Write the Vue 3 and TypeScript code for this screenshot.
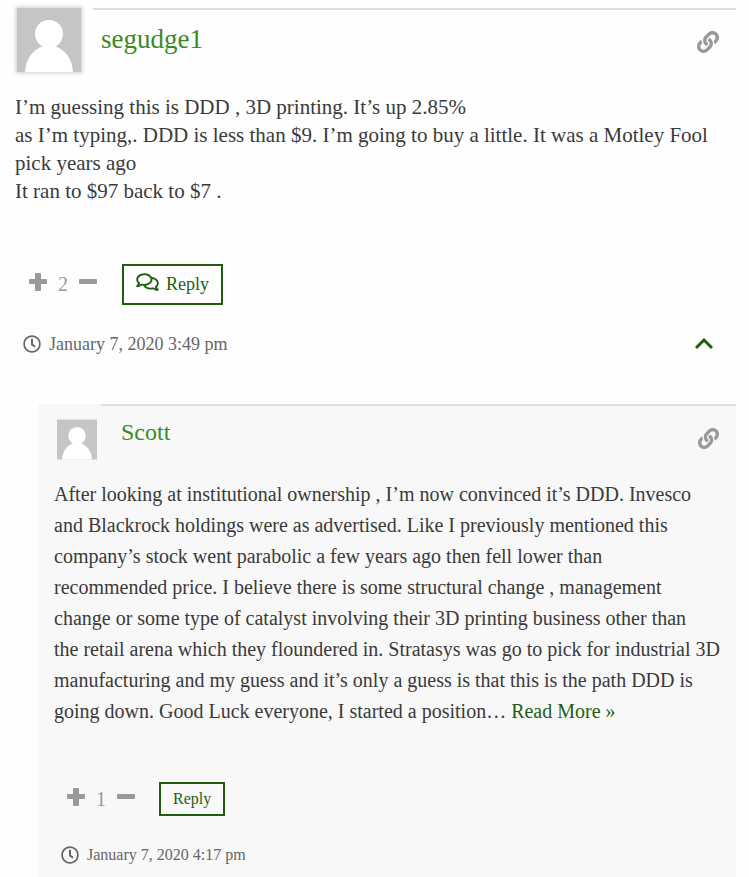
<script setup lang="ts">
import { ref } from 'vue'

interface Comment {
  id: number
  author: string
  lines: string[]
  truncated: boolean
  votes: number
  date: string
  reply: boolean
}

const comments = ref<Comment[]>([
  {
    id: 1,
    author: 'segudge1',
    lines: [
      'I’m guessing this is DDD , 3D printing. It’s up 2.85%',
      'as I’m typing,. DDD is less than $9. I’m going to buy a little. It was a Motley Fool pick years ago',
      'It ran to $97 back to $7 .',
    ],
    truncated: false,
    votes: 2,
    date: 'January 7, 2020 3:49 pm',
    reply: false,
  },
  {
    id: 2,
    author: 'Scott',
    lines: [
      'After looking at institutional ownership , I’m now convinced it’s DDD. Invesco',
      'and Blackrock holdings were as advertised. Like I previously mentioned this',
      'company’s stock went parabolic a few years ago then fell lower than',
      'recommended price. I believe there is some structural change , management',
      'change or some type of catalyst involving their 3D printing business other than',
      'the retail arena which they floundered in. Stratasys was go to pick for industrial 3D',
      'manufacturing and my guess and it’s only a guess is that this is the path DDD is',
      'going down. Good Luck everyone, I started a position…',
    ],
    truncated: true,
    votes: 1,
    date: 'January 7, 2020 4:17 pm',
    reply: true,
  },
])
</script>

<template>
  <main class="thread">
    <article v-for="c in comments" :key="c.id" class="comment" :class="{ nested: c.reply }">
      <header class="head">
        <svg class="avatar" viewBox="0 0 64 64" aria-hidden="true">
          <rect width="64" height="64" fill="#c5c5c5" />
          <circle cx="32" cy="26" r="14" fill="#fff" />
          <path d="M8 64C9 50 16 42 26 38H38C48 42 55 50 56 64Z" fill="#fff" />
        </svg>
        <div class="title">
          <a class="author" href="#">{{ c.author }}</a>
          <a class="permalink" href="#" aria-label="Comment link">
            <svg viewBox="0 0 512 512" aria-hidden="true">
              <path d="M326.612 185.391c59.747 59.809 58.927 155.698.36 214.59-.11.12-.24.25-.36.37l-67.2 67.2c-59.27 59.27-155.699 59.262-214.96 0-59.27-59.26-59.27-155.7 0-214.96l37.106-37.106c9.84-9.84 26.786-3.3 27.294 10.606.648 17.722 3.826 35.527 9.69 52.721 1.986 5.822.567 12.262-3.783 16.612l-13.087 13.087c-28.026 28.026-28.905 73.66-1.155 101.96 28.024 28.579 74.086 28.749 102.325.51l67.2-67.19c28.191-28.191 28.073-73.757 0-101.83-3.701-3.694-7.429-6.564-10.341-8.569a16.037 16.037 0 0 1-6.947-12.606c-.396-10.567 3.348-21.456 11.698-29.806l21.054-21.055c5.521-5.521 14.182-6.199 20.584-1.731a152.482 152.482 0 0 1 20.522 17.197zM467.547 44.449c-59.261-59.262-155.69-59.27-214.96 0l-67.2 67.2c-.12.12-.25.25-.36.37-58.566 58.892-59.387 154.781.36 214.59a152.454 152.454 0 0 0 20.521 17.196c6.402 4.468 15.064 3.789 20.584-1.731l21.054-21.055c8.35-8.35 12.094-19.239 11.698-29.806a16.037 16.037 0 0 0-6.947-12.606c-2.912-2.005-6.64-4.875-10.341-8.569-28.073-28.073-28.191-73.639 0-101.83l67.2-67.19c28.239-28.239 74.3-28.069 102.325.51 27.75 28.3 26.872 73.934-1.155 101.96l-13.087 13.087c-4.35 4.35-5.769 10.79-3.783 16.612 5.864 17.194 9.042 34.999 9.69 52.721.509 13.906 17.454 20.446 27.294 10.606l37.106-37.106c59.271-59.259 59.271-155.699.001-214.959z" />
            </svg>
          </a>
        </div>
      </header>

      <p class="text">
        <template v-for="(line, i) in c.lines" :key="i"><br v-if="i > 0" />{{ line }}</template>
        <template v-if="c.truncated">{{ ' ' }}<a class="more" href="#">Read More »</a></template>
      </p>

      <div class="actions">
        <button class="vote" type="button" aria-label="Vote up" @click="c.votes++">
          <svg viewBox="0 0 18 18" aria-hidden="true"><path d="M7 0H11Q12 0 12 1V6H17Q18 6 18 7V10Q18 11 17 11H12V17Q12 18 11 18H7Q6 18 6 17V11H1Q0 11 0 10V7Q0 6 1 6H6V1Q6 0 7 0Z" /></svg>
        </button>
        <span class="count">{{ c.votes }}</span>
        <button class="vote" type="button" aria-label="Vote down" @click="c.votes--">
          <svg viewBox="0 0 18 18" aria-hidden="true"><rect y="6" width="18" height="5" rx="1" /></svg>
        </button>
        <button class="reply" type="button">
          <svg v-if="!c.reply" viewBox="0 0 576 512" aria-hidden="true">
            <path d="M532 386.2c27.5-27.1 44-61.1 44-98.2 0-80-76.5-146.1-176.2-157.9C368.3 72.5 294.3 32 208 32 93.1 32 0 103.6 0 192c0 37 16.5 71 44 98.2-15.3 30.7-37.3 54.5-37.7 54.9-6.3 6.7-8.1 16.5-4.4 25 3.6 8.5 12 14 21.2 14 53.5 0 96.7-20.2 125.2-38.8 9.2 2.1 18.7 3.7 28.4 4.9C208.1 407.6 281.8 448 368 448c20.8 0 40.8-2.4 59.8-6.8C456.3 459.7 499.4 480 553 480c9.2 0 17.5-5.5 21.2-14 3.6-8.5 1.9-18.3-4.4-25-.4-.3-22.5-24.1-37.8-54.8zm-392.8-92.3L122.1 305c-14.1 9.1-28.5 16.3-43.1 21.4 2.7-4.7 5.4-9.7 8-14.8l15.5-31.1L77.7 256C64.2 242.6 48 220.7 48 192c0-60.7 73.3-112 160-112s160 51.3 160 112-73.3 112-160 112c-16.5 0-33-1.9-49-5.6l-19.8-4.5zM498.3 352l-24.7 24.4 15.5 31.1c2.6 5.1 5.3 10.1 8 14.8-14.6-5.1-29-12.3-43.1-21.4l-17.1-11.1-19.9 4.6c-16 3.7-32.5 5.6-49 5.6-54 0-102.2-20.1-131.3-49.7C338 339.5 416 272.9 416 192c0-3.4-.4-6.7-.7-10C479.7 196.5 528 238.8 528 288c0 28.7-16.2 50.6-29.7 64z" />
          </svg>
          <span>Reply</span>
        </button>
      </div>

      <footer class="meta">
        <svg class="clock" viewBox="0 0 512 512" aria-hidden="true">
          <path d="M256 8C119 8 8 119 8 256s111 248 248 248 248-111 248-248S393 8 256 8zm0 448c-110.5 0-200-89.5-200-200S145.5 56 256 56s200 89.5 200 200-89.5 200-200 200zm61.8-104.4l-84.9-61.7c-3.1-2.3-4.9-5.9-4.9-9.7V116c0-6.6 5.4-12 12-12h32c6.6 0 12 5.4 12 12v141.7l66.8 48.6c5.4 3.9 6.5 11.4 2.6 16.8L334.6 349c-3.9 5.3-11.4 6.5-16.8 2.6z" />
        </svg>
        <time>{{ c.date }}</time>
        <button v-if="!c.reply" class="toggle" type="button" aria-label="Hide replies">
          <svg viewBox="0 0 18 12" aria-hidden="true"><path d="M1 10L9 2L17 10" /></svg>
        </button>
      </footer>
    </article>
  </main>
</template>

<style>
body {
  margin: 0;
  background: #fefefe;
}
</style>

<style scoped>
.thread {
  padding: 8px 13px 0 0;
  font-family: 'Liberation Serif', 'Times New Roman', serif;
  color: #3a3a3a;
}
.comment {
  padding-bottom: 48px;
}
.head {
  display: flex;
  padding-left: 17px;
}
.avatar {
  flex: none;
  width: 64px;
  height: 64px;
  box-shadow: 0 0 4px 1px #ccc;
}
.title {
  flex: 1;
  display: flex;
  justify-content: space-between;
  align-items: flex-start;
  margin-left: 12px;
  padding: 13px 17px 0 8px;
  border-top: 2px solid #dedede;
}
.author {
  color: #3b8a1d;
  font-size: 27px;
  line-height: 32px;
  text-decoration: none;
}
.permalink {
  padding-top: 8px;
}
.permalink svg {
  display: block;
  width: 22px;
  height: 22px;
  fill: #999;
}
.text {
  margin: 21px 15px 0;
  font-size: 21px;
  line-height: 28px;
}
.more {
  color: #1f5e10;
  text-decoration: none;
}
.actions {
  display: flex;
  align-items: center;
  margin-top: 59px;
  padding-left: 29px;
}
button {
  padding: 0;
  border: 0;
  background: none;
  font-family: inherit;
  cursor: pointer;
}
.vote svg {
  display: block;
  width: 18px;
  height: 18px;
  margin-bottom: 5px;
  fill: #999;
}
.count {
  width: 32px;
  text-align: center;
  font-size: 20px;
  color: #999;
}
.reply {
  display: flex;
  align-items: center;
  gap: 7px;
  height: 41px;
  margin-left: 25px;
  padding: 0 12px;
  border: 2px solid #1f5e10;
  color: #1f5e10;
  font-size: 18px;
}
.reply svg {
  width: 23px;
  height: 20px;
  margin-bottom: 5px;
  fill: #1f5e10;
}
.meta {
  display: flex;
  align-items: center;
  margin-top: 27px;
  padding: 0 23px;
  color: #666;
  font-size: 18px;
  line-height: 24px;
}
.clock {
  width: 18px;
  height: 18px;
  margin-right: 8px;
  fill: #666;
}
.toggle {
  margin-left: auto;
}
.toggle svg {
  display: block;
  width: 18px;
  height: 12px;
  fill: none;
  stroke: #1f5e10;
  stroke-width: 3;
}

.nested {
  margin-left: 38px;
  padding-bottom: 12px;
  background: #f8f8f8;
}
.nested .head {
  padding-left: 19px;
}
.nested .avatar {
  width: 40px;
  height: 41px;
  margin-top: 15px;
  box-shadow: none;
}
.nested .title {
  margin-left: 4px;
  padding: 10px 17px 0 20px;
}
.nested .author {
  font-size: 24px;
}
.nested .permalink {
  padding-top: 12px;
}
.nested .permalink svg {
  width: 21px;
  height: 21px;
}
.nested .text {
  margin: 19px 12px 0 16px;
  font-size: 20px;
  line-height: 31px;
}
.nested .actions {
  margin-top: 55px;
}
.nested .reply {
  height: 34px;
  margin-left: 24px;
  font-size: 16px;
}
.nested .meta {
  font-size: 16px;
}
</style>
